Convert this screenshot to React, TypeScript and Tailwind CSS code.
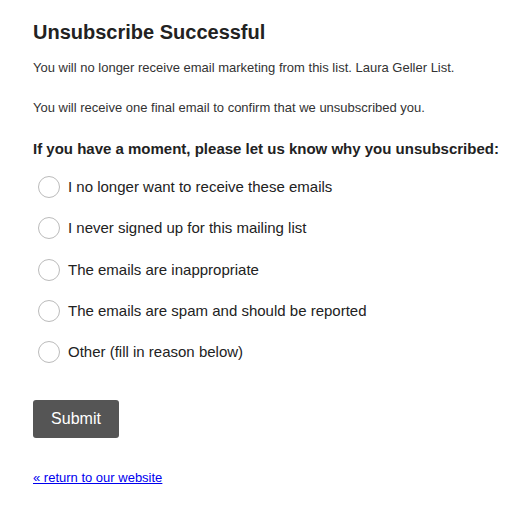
import React from "react";

const options = [
  "I no longer want to receive these emails",
  "I never signed up for this mailing list",
  "The emails are inappropriate",
  "The emails are spam and should be reported",
  "Other (fill in reason below)",
];

export default function App() {
  return (
    <div className="min-h-[530px] bg-white pl-[33px] pr-[10px] pt-[20px] text-[#333] [font-family:'Liberation_Sans',Arial,sans-serif]">
      <h1 className="text-[20px] font-bold leading-[24px] text-[#222]">Unsubscribe Successful</h1>
      <p className="mt-[16px] text-[13px] leading-[16px]">
        You will no longer receive email marketing from this list. Laura Geller List.
      </p>
      <p className="mt-[24px] text-[13px] leading-[16px]">
        You will receive one final email to confirm that we unsubscribed you.
      </p>
      <h2 className="mt-[24px] whitespace-nowrap text-[15px] font-bold leading-[18px] text-[#222]">
        If you have a moment, please let us know why you unsubscribed:
      </h2>
      <div className="mt-[18px] flex flex-col gap-[19.25px] pl-[5px]">
        {options.map((o) => (
          <label key={o} className="flex items-center gap-[8px] text-[15px] leading-[22px] text-[#222]">
            <span className="h-[22px] w-[22px] rounded-full border border-[#bbb] bg-white" />
            <span>{o}</span>
          </label>
        ))}
      </div>
      <button className="mt-[37px] h-[38px] w-[86px] rounded-[3px] bg-[#555] text-[16px] text-white">
        Submit
      </button>
      <div className="mt-[27px]">
        <a href="#" className="text-[13px] leading-[16px] text-[#00e] underline">
          « return to our website
        </a>
      </div>
    </div>
  );
}
